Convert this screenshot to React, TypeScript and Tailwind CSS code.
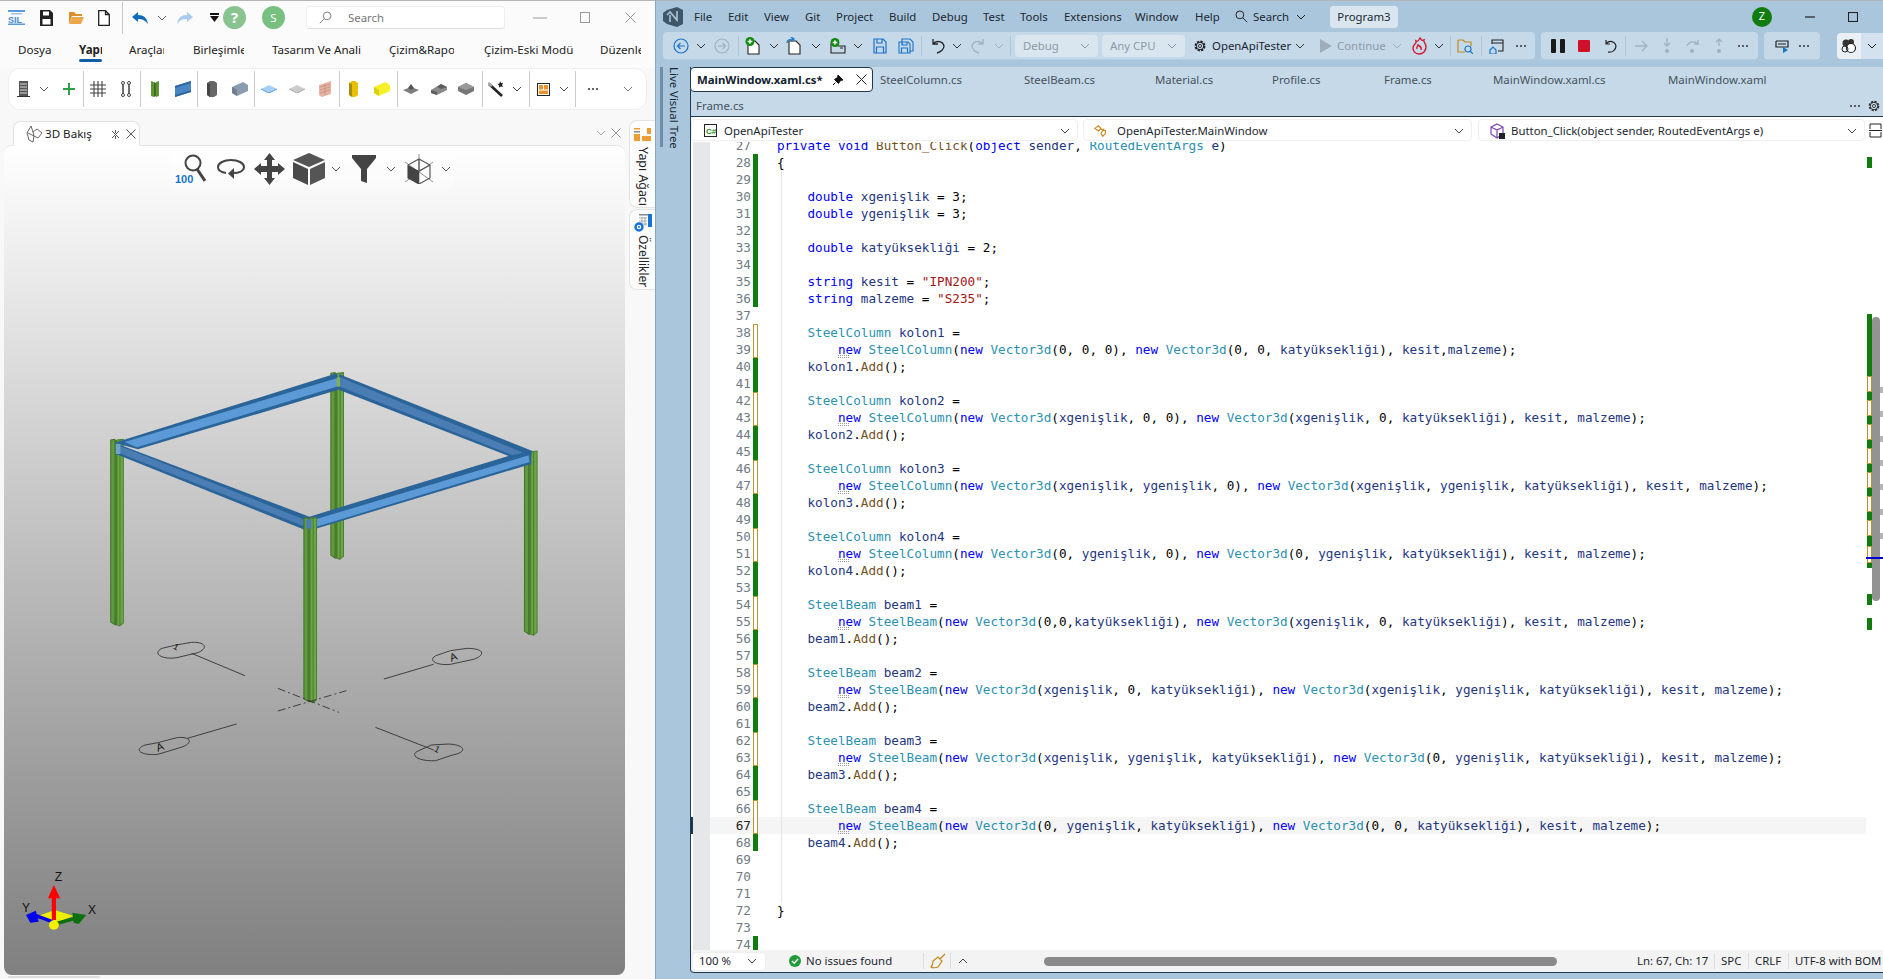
import React from "react";

const Chev = ({ c = "", up = false }: { c?: string; up?: boolean }) => (
  <svg viewBox="0 0 10 10" className={"w-[10px] h-[10px] shrink-0 " + c} fill="none" stroke="currentColor" strokeWidth="1">
    <path d={up ? "M1 7 L5 3 L9 7" : "M1 3 L5 7 L9 3"} />
  </svg>
);
const Sep = ({ c = "" }: { c?: string }) => <div className={"w-[1px] shrink-0 " + c} />;
const Ic = ({ c, children, v = "0 0 16 16" }: { c: string; children: React.ReactNode; v?: string }) => (
  <svg viewBox={v} className={"shrink-0 " + c}>{children}</svg>
);
const Dots = ({ c = "" }: { c?: string }) => (
  <Ic c={"w-[12px] h-[4px] " + c} v="0 0 12 4"><circle cx="2" cy="2" r="1" fill="#333" /><circle cx="6" cy="2" r="1" fill="#333" /><circle cx="10" cy="2" r="1" fill="#333" /></Ic>
);

/* ---------- left app ---------- */
function LeftTitle() {
  return (
    <div className="flex items-center h-[33px] shrink-0 bg-[#fbfbfb]">
      <Ic c="w-[17px] h-[15px] ml-[8px]" v="0 0 17 15">
        <rect x="0" y="0" width="17" height="2" fill="#5b9bd5" /><rect x="3" y="3" width="11" height="1.5" fill="#9cc3e6" />
        <text x="0" y="13" fontSize="9" fontWeight="700" fill="#4a8ccb" fontFamily="Liberation Sans">SIL</text>
        <rect x="0" y="13.5" width="17" height="1.5" fill="#5b9bd5" />
      </Ic>
      <Ic c="w-[13px] h-[16px] ml-[15px]" v="0 0 13 16"><path d="M0 0H10L13 3V16H0Z" fill="#222" /><rect x="3" y="1.5" width="6" height="4" fill="#fff" /><rect x="2.5" y="9" width="8" height="5.5" fill="#fff" /></Ic>
      <Ic c="w-[15px] h-[13px] ml-[16px]" v="0 0 15 13"><path d="M0 1H5L7 3H13V5H3L0 13Z" fill="#d98f2e" /><path d="M3 6H15L12 13H0Z" fill="#eda64a" /></Ic>
      <Ic c="w-[12px] h-[16px] ml-[14px]" v="0 0 12 16"><path d="M.7.7H7.5L11.3 4.5V15.3H.7Z M7.5.7V4.5H11.3" fill="#fff" stroke="#222" strokeWidth="1.3" /></Ic>
      <Sep c="h-[32px] bg-[#c9c9c9] ml-[12px]" />
      <Ic c="w-[16px] h-[12px] ml-[9px]" v="0 0 16 12"><path d="M0 5L6 0V3C12 3 15 6 16 12C13 8 10 7 6 7V10Z" fill="#0f6cbd" /></Ic>
      <Chev c="ml-[9px] text-[#666]" />
      <Ic c="w-[16px] h-[12px] ml-[10px]" v="0 0 16 12"><path d="M16 5L10 0V3C4 3 1 6 0 12C3 8 6 7 10 7V10Z" fill="#a8cbee" /></Ic>
      <Ic c="w-[9px] h-[9px] ml-[17px]" v="0 0 9 9"><rect x="0" y="0" width="9" height="2" fill="#111" /><path d="M0 3H9L4.5 9Z" fill="#111" /></Ic>
      <div className="w-[23px] h-[23px] ml-[4px] rounded-full bg-[#88c48f] text-white font-bold text-[15px] flex items-center justify-center shrink-0">?</div>
      <div className="w-[23px] h-[23px] ml-[16px] rounded-full bg-[#77c07f] text-white text-[11.4px] flex items-center justify-center shrink-0">S</div>
      <div className="w-[199px] h-[23px] ml-[21px] bg-white rounded border border-[#eeeeee] border-b-[#dddddd] flex items-center shrink-0">
        <Ic c="w-[13px] h-[13px] ml-[12px]"><circle cx="10" cy="6" r="4.7" fill="none" stroke="#666" strokeWidth="1" /><path d="M6.5 9.5L1 15" stroke="#666" /></Ic>
        <span className="ml-[16px] text-[11.4px] text-[#777]">Search</span>
      </div>
      <Ic c="w-[14px] h-[10px] ml-[28px]" v="0 0 14 10"><path d="M0 5H14" stroke="#999" /></Ic>
      <Ic c="w-[10px] h-[11px] ml-[33px]" v="0 0 10 11"><rect x=".5" y=".5" width="9" height="10" fill="none" stroke="#999" /></Ic>
      <Ic c="w-[11px] h-[11px] ml-[35px]" v="0 0 11 11"><path d="M.5.5L10.5 10.5M10.5.5L.5 10.5" stroke="#999" /></Ic>
    </div>
  );
}

function RibbonTabs() {
  const t = "whitespace-nowrap overflow-hidden shrink-0 h-[17px] leading-[17px] ";
  return (
    <div className="flex items-start h-[34px] pt-[7px] shrink-0 text-[11.6px] text-[#222] bg-[#fbfbfb]">
      <div className={t + "ml-[18px] w-[34px]"}>Dosya</div>
      <div className="ml-[27px] w-[23px] shrink-0 flex flex-col">
        <div className="h-[17px] leading-[17px] font-bold overflow-hidden whitespace-nowrap">Yapı</div>
        <div className="mt-[1px] h-[3px] rounded bg-[#0f5fa8]" />
      </div>
      <div className={t + "ml-[27px] w-[35px]"}>Araçlar</div>
      <div className={t + "ml-[29px] w-[51px]"}>Birleşimler</div>
      <div className={t + "ml-[28px] w-[89px]"}>Tasarım Ve Analiz</div>
      <div className={t + "ml-[28px] w-[65px]"}>Çizim&Rapor</div>
      <div className={t + "ml-[30px] w-[90px]"}>Çizim-Eski Modü</div>
      <div className={t + "ml-[26px] w-[41px]"}>Düzenle</div>
    </div>
  );
}

const Foot = ({ c, v }: { c: string; v: number }) => (
  <Ic c={"w-[16px] h-[14px] " + c} v="0 0 16 14">
    {v === 0 && <path d="M0 8L8 5L16 8L8 12Z" fill="#7d7d7d" />}
    {v === 0 && <path d="M5 6L8 2L11 6L8 8Z" fill="#555" />}
    {v === 1 && <path d="M0 8L10 2L16 5L16 8L6 13L0 11Z" fill="#8a8a8a" />}
    {v === 1 && <path d="M0 8L6 10V13L0 11Z M10 2L16 5L10 7L6 5Z" fill="#5d5d5d" />}
    {v === 2 && <path d="M0 5L8 1L16 5V9L8 13L0 9Z" fill="#777" />}
    {v === 2 && <path d="M0 5L8 1L16 5L8 8Z" fill="#9b9b9b" />}
  </Ic>
);

function Ribbon() {
  const s = "h-[36px] bg-[#cccccc]";
  return (
    <div className="ml-[8px] w-[639px] h-[42px] shrink-0 bg-white rounded-[12px] border border-[#eeeeee] flex items-center">
      <Ic c="w-[13px] h-[16px] ml-[8px]" v="0 0 13 16"><rect x="2" y="0" width="9" height="15" fill="#555" /><path d="M3 3H10M3 6H10M3 9H10M3 12H10" stroke="#ddd" /><path d="M0 15.5H13" stroke="#333" /></Ic>
      <Chev c="ml-[9px] text-[#555]" />
      <Ic c="w-[12px] h-[12px] ml-[14px]" v="0 0 12 12"><path d="M6 0V12M0 6H12" stroke="#2f9e44" strokeWidth="2" /></Ic>
      <Sep c={s + " ml-[8px]"} />
      <Ic c="w-[16px] h-[16px] ml-[6px]"><path d="M4 0V16M8 0V16M12 0V16M0 4H16M0 8H16M0 12H16" stroke="#444" strokeWidth="1.1" /></Ic>
      <Ic c="w-[10px] h-[16px] ml-[15px]" v="0 0 10 16"><circle cx="2" cy="2" r="1.5" fill="none" stroke="#444" /><circle cx="8" cy="2" r="1.5" fill="none" stroke="#444" /><circle cx="2" cy="14" r="1.5" fill="none" stroke="#444" /><circle cx="8" cy="14" r="1.5" fill="none" stroke="#444" /><path d="M2 3.5V12.5M8 3.5V12.5" stroke="#222" strokeWidth="1.3" /></Ic>
      <Sep c={s + " ml-[9px]"} />
      <Ic c="w-[8px] h-[16px] ml-[10px]" v="0 0 8 16"><path d="M0 0L3 1V16L0 15Z" fill="#5f9336" /><path d="M3 1L5 2V15L3 16Z" fill="#3f6f22" /><path d="M5 1L8 0V15L5 16Z" fill="#5f9336" /></Ic>
      <Ic c="w-[16px] h-[16px] ml-[16px]"><path d="M0 5L16 0V11L0 16Z" fill="#4a86c5" /><path d="M0 5L16 0V2L0 7ZM0 14L16 9V11L0 16Z" fill="#2f66a0" /></Ic>
      <Sep c={s + " ml-[6px]"} />
      <Ic c="w-[10px] h-[16px] ml-[9px]" v="0 0 10 16"><path d="M0 2L3 0H7L10 2V14L7 16H3L0 14Z" fill="#666" /><path d="M0 2L3 3V16L0 14Z" fill="#444" /></Ic>
      <Ic c="w-[16px] h-[14px] ml-[15px]" v="0 0 16 14"><path d="M0 5L11 0L16 3V9L5 14L0 11Z" fill="#8c9cb0" /><path d="M0 5L5 8V14L0 11Z" fill="#6f7f92" /></Ic>
      <Sep c={s + " ml-[6px]"} />
      <Ic c="w-[16px] h-[8px] ml-[6px]" v="0 0 16 8"><path d="M0 4L8 0L16 4L8 8Z" fill="#a6d0f5" /><path d="M0 4L8 8L16 4" fill="none" stroke="#5b9bd5" /></Ic>
      <Ic c="w-[16px] h-[8px] ml-[12px]" v="0 0 16 8"><path d="M0 4L8 0L16 4L8 8Z" fill="#cccccc" /><path d="M0 4L8 8L16 4" fill="none" stroke="#a8a8a8" /></Ic>
      <Ic c="w-[12px] h-[16px] ml-[14px]" v="0 0 12 16"><path d="M0 4L12 0V13L3 16L0 14Z" fill="#e7b3a1" /><path d="M1 6L11 3M1 9L11 6M1 12L11 9M6 3V14" stroke="#c08a78" strokeWidth=".7" /></Ic>
      <Sep c={s + " ml-[8px]"} />
      <Ic c="w-[9px] h-[16px] ml-[9px]" v="0 0 9 16"><path d="M0 2L3 0H6L9 2V14L6 16H3L0 14Z" fill="#e8c000" /><path d="M0 2L3 3V16L0 14Z" fill="#a88c10" /></Ic>
      <Ic c="w-[16px] h-[14px] ml-[16px]" v="0 0 16 14"><path d="M0 5L11 0L16 3V9L5 14L0 11Z" fill="#f7ef2a" /><path d="M0 5L5 8V14L0 11Z" fill="#d8cf10" /></Ic>
      <Sep c={s + " ml-[7px]"} />
      <Foot c="ml-[5px]" v={0} />
      <Foot c="ml-[12px]" v={1} />
      <Foot c="ml-[11px]" v={2} />
      <Sep c={s + " ml-[8px]"} />
      <Ic c="w-[17px] h-[16px] ml-[5px]" v="0 0 17 16"><path d="M1 3L14 15" stroke="#222" strokeWidth="2.6" /><path d="M0 2L4 5" stroke="#aaa" strokeWidth="2.6" /><path d="M12 0L13 2L15 2L14 4L15 6L13 5.5L11 6.5L11 4.5L9.5 3L11.5 2.5Z" fill="#222" /></Ic>
      <Chev c="ml-[7px] text-[#444]" />
      <Sep c={s + " ml-[7px]"} />
      <Ic c="w-[13px] h-[13px] ml-[7px]" v="0 0 13 13"><rect x=".5" y=".5" width="12" height="12" fill="#fff" stroke="#222" /><rect x="2" y="2" width="4" height="4.5" fill="#e8912d" /><rect x="7" y="2" width="4" height="4.5" fill="#e8912d" /><rect x="2" y="7.5" width="9" height="3.5" fill="#e8912d" /></Ic>
      <Chev c="ml-[9px] text-[#444]" />
      <Sep c={s + " ml-[6px]"} />
      <Dots c="ml-[11px]" />
      <Chev c="ml-[24px] text-[#777]" />
    </div>
  );
}

/* ---- 3D model, coordinates taken from the picture: x scaled to 1568/660, y scaled by 3 ---- */
const Column = ({ x, top, bot }: { x: number; top: number; bot: number }) => (
  <g>
    <path d={`M${x} ${top}L${x + 10} ${top - 2}V${bot + 2}L${x} ${bot - 6}Z`} fill="#5f9a3c" stroke="#44702c" strokeWidth="1" vectorEffect="non-scaling-stroke" />
    <path d={`M${x + 10} ${top}H${x + 15}V${bot + 4}H${x + 10}Z`} fill="#4a7a2e" />
    <path d={`M${x + 15} ${top}L${x + 30} ${top - 2}V${bot - 3}L${x + 21} ${bot + 6}L${x + 15} ${bot + 2}Z`} fill="#6aa845" stroke="#4f7f33" strokeWidth="1" vectorEffect="non-scaling-stroke" />
    <path d={`M${x + 22} ${top}V${bot + 5}`} stroke="#4a7a2e" strokeWidth="1" vectorEffect="non-scaling-stroke" />
  </g>
);

function Model() {
  const L = { stroke: "#333", strokeWidth: 0.9, vectorEffect: "non-scaling-stroke" as const, fill: "none" };
  return (
    <svg viewBox="0 0 1568 1920" preserveAspectRatio="none" className="absolute left-[-4px] top-[194px] w-[660px] h-[640px] pointer-events-none">
      <Column x={786} top={100} bot={652} />
      <Column x={263} top={300} bot={852} />
      <Column x={1246} top={335} bot={880} />
      {/* beams */}
      <path d="M272 308L800 100L808 148L328 328L300 318Z" fill="#2b6498" />
      <path d="M296 306L802 114L805 138L325 322Z" fill="#5b9ad6" />
      <path d="M806 103L1265 333L1262 345L1212 350L806 150Z" fill="#2b6498" />
      <path d="M808 112L1243 338L1218 346L808 140Z" fill="#4a7db3" />
      <path d="M275 310L735 530L752 566L725 570L275 342Z" fill="#2b6498" />
      <path d="M285 318L725 540L725 560L285 340Z" fill="#4a7db3" />
      <path d="M735 530L1212 346L1262 340V372L750 566L726 560Z" fill="#2b6498" />
      <path d="M752 537L1256 346L1258 366L752 560Z" fill="#5b9ad6" />
      <Column x={722} top={535} bot={1082} />
      <path d="M728 538H740V566H728Z" fill="#4a7db3" />
      <path d="M800 112H808V140H800Z" fill="#7fb24f" />
      <path d="M275 312H286V342H275Z" fill="#6fa3c8" />
      {/* grid bubbles */}
      <path d="M415 916L455 907C490 905 495 925 470 938L420 953C385 960 360 940 385 925Z" {...L} />
      <path d="M455 940L582 1007" {...L} />
      <path d="M1070 932L1110 925C1150 925 1155 945 1125 958L1070 973C1030 978 1015 955 1040 945Z" {...L} />
      <path d="M912 1017L1030 973" {...L} />
      <path d="M375 1208L420 1193C455 1188 460 1210 430 1222L375 1243C335 1248 315 1228 345 1215Z" {...L} />
      <path d="M445 1195L562 1152" {...L} />
      <path d="M1025 1215L1065 1212C1110 1215 1108 1238 1075 1245L1035 1262C995 1265 970 1245 995 1232Z" {...L} />
      <path d="M892 1162L1030 1230" {...L} />
      <path d="M660 1045L805 1117" {...L} strokeDasharray="8 3 2 3" />
      <path d="M660 1113L823 1052" {...L} strokeDasharray="8 3 2 3" />
      <text transform="translate(410 925) scale(2.376 3) rotate(28)" fontSize="9" fontFamily="Liberation Sans" fill="#111">1</text>
      <text transform="translate(1072 965) scale(2.376 3) rotate(-20)" fontSize="11" fontFamily="Liberation Sans" fill="#111">A</text>
      <text transform="translate(375 1235) scale(2.376 3) rotate(-20)" fontSize="11" fontFamily="Liberation Sans" fill="#111">A</text>
      <text transform="translate(1030 1232) scale(2.376 3) rotate(28)" fontSize="9" fontFamily="Liberation Sans" fill="#111">1</text>
      {/* axes */}
      <path d="M90 1728L130 1710L175 1728L130 1750Z" fill="#eeee00" />
      <path d="M125 1745L75 1722" stroke="#0000ee" strokeWidth="10" />
      <path d="M62 1725L85 1712L92 1745L72 1748Z" fill="#0000ee" />
      <path d="M135 1750L185 1733" stroke="#0d6f0d" strokeWidth="10" />
      <path d="M172 1718L205 1725L187 1752L175 1748Z" fill="#0d6f0d" />
      <path d="M128 1740V1672" stroke="#ff0000" strokeWidth="10" />
      <path d="M114 1675L128 1635L143 1675Z" fill="#ff0000" />
      <ellipse cx="128" cy="1755" rx="12" ry="14" fill="#f5f000" />
      <text transform="translate(130 1622) scale(2.376 3)" fontSize="12" fontFamily="Liberation Sans" fill="#111">Z</text>
      <text transform="translate(52 1716) scale(2.376 3)" fontSize="12" fontFamily="Liberation Sans" fill="#111">Y</text>
      <text transform="translate(209 1722) scale(2.376 3)" fontSize="12" fontFamily="Liberation Sans" fill="#111">X</text>
    </svg>
  );
}

function ViewportTools() {
  return (
    <div className="flex items-center ml-[168px] mt-[4px] w-[282px] h-[38px] rounded-lg bg-white/40">
      <Ic c="w-[31px] h-[30px] ml-[3px]" v="0 0 31 30">
        <circle cx="18" cy="9" r="7.5" fill="none" stroke="#444" strokeWidth="2" /><path d="M22 15L30 27" stroke="#444" strokeWidth="3" />
        <text x="0" y="29" fontSize="11" fontWeight="700" fill="#1a73c9" fontFamily="Liberation Sans">100</text>
      </Ic>
      <Ic c="w-[28px] h-[22px] ml-[11px]" v="0 0 28 22"><path d="M9 15C3 14 1 11 1 9C1 5 7 2 14 2C21 2 27 5 27 9C27 13 22 15 16 15" fill="none" stroke="#444" strokeWidth="2" /><path d="M17 10L11 15.5L17 21Z" fill="#444" /></Ic>
      <Ic c="w-[31px] h-[32px] ml-[9px]" v="0 0 31 32"><path d="M15.5 0L21 7H18V13H24V10L31 16L24 22V19H18V25H21L15.5 32L10 25H13V19H7V22L0 16L7 10V13H13V7H10Z" fill="#444" /></Ic>
      <Ic c="w-[32px] h-[32px] ml-[8px]" v="0 0 32 32"><path d="M16 0L32 7L16 14L0 7Z" fill="#555" /><path d="M0 9L15 16V32L0 25Z" fill="#4a4a4a" /><path d="M32 9L17 16V32L32 25Z" fill="#555" /></Ic>
      <Chev c="ml-[6px] text-[#555]" />
      <Ic c="w-[24px] h-[28px] ml-[11px]" v="0 0 24 28"><path d="M0 0H24V3L15 14V28L9 26V14L0 3Z" fill="#444" /></Ic>
      <Chev c="ml-[10px] text-[#555]" />
      <Ic c="w-[32px] h-[30px] ml-[7px]" v="0 0 32 30">
        <path d="M16 0V30M2 28L30 8M30 28L2 8" stroke="#777" strokeWidth=".8" />
        <path d="M16 5L27 11V24L16 30L5 24V11Z" fill="none" stroke="#555" strokeWidth="1.2" />
        <path d="M5 11L16 17V30L5 24Z" fill="#444" /><path d="M16 17L27 11M16 5V17" stroke="#555" strokeWidth="1.2" />
      </Ic>
      <Chev c="ml-[6px] text-[#555]" />
    </div>
  );
}

function LeftRail() {
  return (
    <div className="w-[26px] shrink-0 flex flex-col mt-[10px]">
      <div className="h-[88px] bg-[#fdfdfd] border border-r-0 border-[#e4e4e4] rounded-l-[8px] flex flex-col items-center">
        <Ic c="w-[17px] h-[13px] mt-[7px]" v="0 0 17 13"><rect x="13" y="0" width="4" height="6" fill="#ed9b33" /><rect x="0" y="0" width="6" height="1.5" fill="#ed9b33" /><rect x="0" y="3" width="6" height="1.5" fill="#888" /><rect x="0" y="6" width="6" height="7" fill="#ed9b33" /><rect x="8" y="8" width="9" height="5" fill="#ed9b33" /></Ic>
        <span className="[writing-mode:vertical-rl] text-[12.4px] leading-[14px] text-[#222] mt-[6px] whitespace-nowrap">Yapı Ağacı</span>
      </div>
      <div className="h-[81px] mt-[1px] bg-[#fdfdfd] border border-r-0 border-[#e4e4e4] rounded-l-[8px] flex flex-col items-center">
        <Ic c="w-[18px] h-[18px] mt-[4px]" v="0 0 18 18"><rect x="5" y="0" width="13" height="1.5" fill="#888" /><path d="M5 4H13M5 7H13M5 10H13M8 3V12M11 3V12" stroke="#aaa" /><rect x="14" y="0" width="4" height="13" fill="#1473d6" /><circle cx="5" cy="13" r="3.5" fill="none" stroke="#1473d6" strokeWidth="2.4" /><circle cx="5" cy="13" r="1" fill="#1473d6" /></Ic>
        <span className="[writing-mode:vertical-rl] text-[12px] leading-[14px] text-[#222] mt-[3px] whitespace-nowrap">Özellikler</span>
      </div>
    </div>
  );
}

function LeftApp() {
  return (
    <div className="w-[655px] shrink-0 h-[979px] flex flex-col bg-[#f8f8f8] border-t border-[#b5b5b5] overflow-hidden">
      <LeftTitle />
      <RibbonTabs />
      <Ribbon />
      <div className="flex flex-1 min-h-0">
        <div className="w-[629px] shrink-0 flex flex-col">
          <div className="h-[35px] shrink-0 flex items-end pl-[13px] pr-[8px]">
            <div className="w-[130px] h-[25px] flex items-center bg-white border border-b-0 border-[#e2e2e2] rounded-t-[7px] -mb-[1px] relative z-10">
              <Ic c="w-[18px] h-[18px] ml-[11px]" v="0 0 18 18"><path d="M6 1L2 8L4 15L8 17L9 11L13 13L17 8L12 4L8 7Z M8 7L9 11M3 8L9 11" fill="none" stroke="#555" strokeWidth=".9" /></Ic>
              <span className="ml-[2px] w-[46px] shrink-0 text-[11.6px] text-[#222] whitespace-nowrap">3D Bakış</span>
              <Ic c="w-[9px] h-[9px] ml-[20px]" v="0 0 9 9"><path d="M1 1L8 8M8 1L1 8M4.5 0V3M4.5 6V9" stroke="#555" /></Ic>
              <Ic c="w-[10px] h-[10px] ml-[6px]" v="0 0 10 10"><path d="M.5.5L9.5 9.5M9.5.5L.5 9.5" stroke="#555" /></Ic>
            </div>
            <Chev c="ml-[456px] mb-[7px] text-[#aaa]" />
            <Ic c="w-[10px] h-[10px] ml-[5px] mb-[7px]" v="0 0 10 10"><path d="M.5.5L9.5 9.5M9.5.5L.5 9.5" stroke="#999" /></Ic>
          </div>
          <div className="ml-[4px] w-[621px] h-[830px] shrink-0 rounded-t-[8px] rounded-b-[8px] border-t border-[#e5e5e5] bg-linear-to-b from-white to-[#808080] relative overflow-hidden">
            <ViewportTools />
            <Model />
          </div>
          <div className="ml-[8px] mt-[1px] w-[92px] h-[2px] bg-[#dddddd] rounded" />
        </div>
        <LeftRail />
      </div>
    </div>
  );
}

/* ---------- Visual Studio ---------- */
function VsTitle() {
  const m = "shrink-0 whitespace-nowrap ";
  return (
    <div className="h-[32px] shrink-0 flex items-center border-t border-[#b5b5b5] text-[11.4px] text-[#1b2630]">
      <Ic c="w-[20px] h-[20px] ml-[7px]" v="0 0 20 20"><path d="M0 6L4 3L14 0L20 3V17L14 20L4 17L0 14Z" fill="#3f5568" /><path d="M4 8L7 5L14 13V4M7 8V15" fill="none" stroke="#a9c6dc" strokeWidth="1.6" /></Ic>
      <div className={m + "ml-[11px] w-[34px]"}>File</div>
      <div className={m + "w-[36px]"}>Edit</div>
      <div className={m + "w-[41px]"}>View</div>
      <div className={m + "w-[31px]"}>Git</div>
      <div className={m + "w-[53px]"}>Project</div>
      <div className={m + "w-[43px]"}>Build</div>
      <div className={m + "w-[51px]"}>Debug</div>
      <div className={m + "w-[37px]"}>Test</div>
      <div className={m + "w-[44px]"}>Tools</div>
      <div className={m + "w-[71px]"}>Extensions</div>
      <div className={m + "w-[60px]"}>Window</div>
      <div className={m + "w-[40px]"}>Help</div>
      <Ic c="w-[13px] h-[13px]"><circle cx="6" cy="6" r="4.8" fill="none" stroke="#222" strokeWidth="1.2" /><path d="M9.5 9.5L15 15" stroke="#222" strokeWidth="1.2" /></Ic>
      <div className={m + "ml-[5px] w-[43px]"}>Search</div>
      <Chev c="text-[#222]" />
      <div className="ml-[24px] w-[68px] h-[22px] shrink-0 bg-[#d9e6f0] rounded flex items-center justify-center">Program3</div>
      <div className="ml-[354px] w-[20px] h-[20px] shrink-0 rounded-full bg-[#107c10] text-white text-[11px] flex items-center justify-center">Z</div>
      <Ic c="w-[10px] h-[10px] ml-[33px]" v="0 0 10 10"><path d="M0 5H10" stroke="#222" strokeWidth="1.2" /></Ic>
      <Ic c="w-[10px] h-[10px] ml-[33px]" v="0 0 10 10"><rect x=".5" y=".5" width="9" height="9" fill="none" stroke="#222" strokeWidth="1.1" /></Ic>
    </div>
  );
}

function VsToolbar() {
  const sep = "h-[20px] bg-[#aec6d8]";
  const g = "text-[#333]";
  const dim = "text-[#9fb0bd]";
  const bar = "h-[28px] shrink-0 bg-[#c5d9e8] rounded flex items-center border-b border-[#b6cde0]";
  return (
    <div className="h-[28px] shrink-0 flex items-center text-[11.4px]">
      <div className={bar + " ml-[7px] w-[872px]"}>
        <Ic c="w-[16px] h-[16px] ml-[10px]"><circle cx="8" cy="8" r="7" fill="none" stroke="#1a73c9" strokeWidth="1.2" /><path d="M12 8H4.5M7.5 5L4.5 8L7.5 11" fill="none" stroke="#1a73c9" strokeWidth="1.2" /></Ic>
        <Chev c={"ml-[7px] " + g} />
        <Ic c="w-[16px] h-[16px] ml-[8px]"><circle cx="8" cy="8" r="7" fill="none" stroke="#a0b2c0" strokeWidth="1.2" /><path d="M4 8H11.5M8.5 5L11.5 8L8.5 11" fill="none" stroke="#a0b2c0" strokeWidth="1.2" /></Ic>
        <Sep c={sep + " ml-[8px]"} />
        <Ic c="w-[16px] h-[18px] ml-[6px]" v="0 0 16 18"><path d="M3 4H10L14 8V17H3Z" fill="#fff" stroke="#222" strokeWidth="1.1" /><circle cx="5" cy="4.5" r="4.5" fill="#108a10" /><path d="M5 2.2V6.8M2.7 4.5H7.3" stroke="#fff" strokeWidth="1.3" /></Ic>
        <Chev c={"ml-[8px] " + g} />
        <Ic c="w-[16px] h-[18px] ml-[7px]" v="0 0 16 18"><path d="M3 4H10L14 8V17H3Z" fill="#fff" stroke="#222" strokeWidth="1.1" /><path d="M1 6C1 3 3 2 7 2M5 0L8 2L5 4" fill="none" stroke="#1a73c9" strokeWidth="1.2" /></Ic>
        <Chev c={"ml-[9px] " + g} />
        <Ic c="w-[16px] h-[16px] ml-[9px]"><path d="M1 6H6L8 8H15V15H1Z" fill="none" stroke="#222" strokeWidth="1.1" /><circle cx="5" cy="4.5" r="4.5" fill="#108a10" /><path d="M5 2.2V6.8M2.7 4.5H7.3" stroke="#fff" strokeWidth="1.3" /><path d="M10 10H13" stroke="#222" /></Ic>
        <Chev c={"ml-[7px] " + g} />
        <Ic c="w-[14px] h-[16px] ml-[10px]" v="0 0 14 16"><path d="M1 1H10L13 4V15H1Z M4 1V5H9V1 M3.5 15V9H10.5V15" fill="none" stroke="#1a73c9" strokeWidth="1.2" /></Ic>
        <Ic c="w-[16px] h-[16px] ml-[11px]"><path d="M4 1H12L15 4V13H4Z" fill="none" stroke="#1a73c9" strokeWidth="1.1" /><path d="M1 4H10L12 6V15H1Z M4 4V7H9V4 M3.5 15V10H9.5V15" fill="#c5d9e8" stroke="#1a73c9" strokeWidth="1.1" /></Ic>
        <Sep c={sep + " ml-[7px]"} />
        <Ic c="w-[16px] h-[16px] ml-[8px]"><path d="M3 1V6H8M3 6C6 2 13 3 14 8C14 11 11 14 7 15" fill="none" stroke="#222" strokeWidth="1.3" /></Ic>
        <Chev c={"ml-[6px] " + g} />
        <Ic c="w-[16px] h-[16px] ml-[8px]"><path d="M13 1V6H8M13 6C10 2 3 3 2 8C2 11 5 14 9 15" fill="none" stroke="#a0b2c0" strokeWidth="1.3" /></Ic>
        <Chev c={"ml-[8px] " + dim} />
        <Sep c={sep + " ml-[6px]"} />
        <div className="ml-[4px] w-[83px] h-[22px] shrink-0 bg-[#d9e6f0] rounded flex items-center justify-between px-[8px] text-[#8b9aa6]">Debug<Chev c="text-[#8b9aa6]" /></div>
        <div className="ml-[4px] w-[83px] h-[22px] shrink-0 bg-[#d9e6f0] rounded flex items-center justify-between px-[8px] text-[#8b9aa6]">Any CPU<Chev c="text-[#8b9aa6]" /></div>
        <Ic c="w-[14px] h-[14px] ml-[8px]"><circle cx="8" cy="8" r="5" fill="none" stroke="#222" strokeWidth="2.4" strokeDasharray="2.6 1.3" /><circle cx="8" cy="8" r="4.2" fill="none" stroke="#222" /><circle cx="8" cy="8" r="1.8" fill="none" stroke="#222" /></Ic>
        <div className="ml-[5px] w-[82px] shrink-0 whitespace-nowrap text-[#1b2630]">OpenApiTester</div>
        <Chev c={"ml-[1px] " + g} />
        <Ic c="w-[12px] h-[14px] ml-[15px]" v="0 0 12 14"><path d="M0 0L12 7L0 14Z" fill="#a0aeba" /></Ic>
        <div className="ml-[5px] w-[50px] shrink-0 text-[#8b9aa6]">Continue</div>
        <Chev c={"ml-[5px] " + dim} />
        <Ic c="w-[16px] h-[18px] ml-[10px]" v="0 0 16 18"><path d="M8 1C10 3 9 4 12 3C11 5 14 6 14 10C14 14 11 17 7 17C3 17 1 14 1 11C1 7 5 7 4 4C6 5 7 3 8 1Z" fill="none" stroke="#d3182d" strokeWidth="1.4" /><path d="M5 12C4 10 6 9 6 8C8 9 10 10 9 13" fill="none" stroke="#d3182d" strokeWidth="1.4" /></Ic>
        <Chev c={"ml-[6px] " + g} />
        <Sep c={sep + " ml-[6px]"} />
        <Ic c="w-[16px] h-[16px] ml-[6px]"><path d="M1 2H6L8 4H14V8M1 2V14H8" fill="none" stroke="#c58a1c" strokeWidth="1.2" /><circle cx="11" cy="11" r="3" fill="none" stroke="#1a73c9" strokeWidth="1.2" /><path d="M13 13L16 16" stroke="#1a73c9" strokeWidth="1.2" /></Ic>
        <Sep c={sep + " ml-[8px]"} />
        <Ic c="w-[16px] h-[16px] ml-[7px]"><path d="M3 6V2H14V13H9M3 5H14" fill="none" stroke="#222" strokeWidth="1.1" /><path d="M1 12L4 9L7 12V16H1Z" fill="none" stroke="#1a73c9" strokeWidth="1.2" /></Ic>
        <Dots c="ml-[10px]" />
      </div>
      <div className={bar + " ml-[6px] w-[217px]"}>
        <div className="ml-[10px] w-[14px] h-[14px] shrink-0 flex justify-between"><div className="w-[5px] h-[14px] bg-[#1a1a1a] rounded-[1px]" /><div className="w-[5px] h-[14px] bg-[#1a1a1a] rounded-[1px]" /></div>
        <div className="ml-[13px] w-[12px] h-[12px] shrink-0 bg-[#d00f28] rounded-[1px]" />
        <Ic c="w-[16px] h-[16px] ml-[12px]"><path d="M4 2V6H8M4.5 5.5C7 2 13 3 14 8C14 12 10 15 6 14" fill="none" stroke="#222" strokeWidth="1.2" /></Ic>
        <Sep c={sep + " ml-[7px]"} />
        <Ic c="w-[16px] h-[16px] ml-[7px]"><path d="M2 8H14M9 3L14 8L9 13" fill="none" stroke="#a0b2c0" strokeWidth="1.3" /></Ic>
        <Ic c="w-[16px] h-[16px] ml-[10px]"><path d="M8 0V8M5 5L8 8L11 5" fill="none" stroke="#a0b2c0" strokeWidth="1.3" /><circle cx="8" cy="13" r="2" fill="#a0b2c0" /></Ic>
        <Ic c="w-[16px] h-[16px] ml-[10px]"><path d="M2 8C4 3 10 3 13 6M13 2V6H9" fill="none" stroke="#a0b2c0" strokeWidth="1.3" /><circle cx="7" cy="13" r="2" fill="#a0b2c0" /></Ic>
        <Ic c="w-[16px] h-[16px] ml-[10px]"><path d="M8 8V1M5 4L8 1L11 4" fill="none" stroke="#a0b2c0" strokeWidth="1.3" /><circle cx="8" cy="13" r="2" fill="#a0b2c0" /></Ic>
        <Dots c="ml-[10px]" />
      </div>
      <div className={bar + " ml-[6px] w-[56px]"}>
        <Ic c="w-[16px] h-[16px] ml-[10px]"><path d="M2 3H14V9H8M8 9H2V3M4 6H12" fill="none" stroke="#222" strokeWidth="1.2" /><path d="M9 9V15L14 12Z" fill="#1a73c9" /></Ic>
        <Dots c="ml-[8px]" />
      </div>
      <div className="ml-[17px] h-[26px] flex items-center shrink-0">
        <div className="w-[24px] h-[26px] bg-[#e9f0f6] rounded-l flex items-center justify-center">
          <Ic c="w-[16px] h-[16px]"><circle cx="5" cy="5" r="3.5" fill="#333" /><circle cx="10" cy="4" r="3" fill="#333" /><circle cx="10" cy="10" r="4.5" fill="#fff" stroke="#222" strokeWidth="1.2" /><circle cx="4" cy="11" r="3" fill="none" stroke="#222" /></Ic>
        </div>
        <div className="w-[22px] h-[26px] bg-[#d3e2ee] flex items-center justify-center"><Chev c="text-[#222]" /></div>
      </div>
    </div>
  );
}

const KW = new Set(["double", "string", "new", "private", "void", "object"]);
const TY = new Set(["SteelColumn", "SteelBeam", "Vector3d", "RoutedEventArgs"]);
const ME = new Set(["Add", "Button_Click"]);

function tokenCls(t: string) {
  if (t.startsWith('"')) return "text-[#a31515]";
  if (KW.has(t)) return "text-[#0000ff]";
  if (TY.has(t)) return "text-[#2b91af]";
  if (ME.has(t)) return "text-[#74531f]";
  if (/^[\p{L}_]/u.test(t)) return "text-[#1f377f]";
  return "text-black";
}

const CODE: Record<number, string> = {
  27: "private void Button_Click(object sender, RoutedEventArgs e)",
  28: "{",
  30: "    double xgenişlik = 3;",
  31: "    double ygenişlik = 3;",
  33: "    double katyüksekliği = 2;",
  35: '    string kesit = "IPN200";',
  36: '    string malzeme = "S235";',
  38: "    SteelColumn kolon1 =",
  39: "        new SteelColumn(new Vector3d(0, 0, 0), new Vector3d(0, 0, katyüksekliği), kesit,malzeme);",
  40: "    kolon1.Add();",
  42: "    SteelColumn kolon2 =",
  43: "        new SteelColumn(new Vector3d(xgenişlik, 0, 0), new Vector3d(xgenişlik, 0, katyüksekliği), kesit, malzeme);",
  44: "    kolon2.Add();",
  46: "    SteelColumn kolon3 =",
  47: "        new SteelColumn(new Vector3d(xgenişlik, ygenişlik, 0), new Vector3d(xgenişlik, ygenişlik, katyüksekliği), kesit, malzeme);",
  48: "    kolon3.Add();",
  50: "    SteelColumn kolon4 =",
  51: "        new SteelColumn(new Vector3d(0, ygenişlik, 0), new Vector3d(0, ygenişlik, katyüksekliği), kesit, malzeme);",
  52: "    kolon4.Add();",
  54: "    SteelBeam beam1 =",
  55: "        new SteelBeam(new Vector3d(0,0,katyüksekliği), new Vector3d(xgenişlik, 0, katyüksekliği), kesit, malzeme);",
  56: "    beam1.Add();",
  58: "    SteelBeam beam2 =",
  59: "        new SteelBeam(new Vector3d(xgenişlik, 0, katyüksekliği), new Vector3d(xgenişlik, ygenişlik, katyüksekliği), kesit, malzeme);",
  60: "    beam2.Add();",
  62: "    SteelBeam beam3 =",
  63: "        new SteelBeam(new Vector3d(xgenişlik, ygenişlik, katyüksekliği), new Vector3d(0, ygenişlik, katyüksekliği), kesit, malzeme);",
  64: "    beam3.Add();",
  66: "    SteelBeam beam4 =",
  67: "        new SteelBeam(new Vector3d(0, ygenişlik, katyüksekliği), new Vector3d(0, 0, katyüksekliği), kesit, malzeme);",
  68: "    beam4.Add();",
  72: "}",
};

function changeCls(n: number) {
  if ((n >= 28 && n <= 36) || n === 68 || n === 74) return "bg-[#107c10]";
  if (n >= 38 && n <= 67) {
    const r = (n - 38) % 4;
    if (r === 0) return "bg-white border-x border-t border-[#b8962e]";
    if (r === 1) return "bg-white border-x border-b border-[#b8962e]";
    return "bg-[#107c10]";
  }
  return "";
}

function Line({ n }: { n: number }) {
  const text = CODE[n] ?? "";
  const parts = text.match(/"[^"]*"|[\p{L}_][\p{L}\p{N}_]*|\d+|\s+|./gu) ?? [];
  const cur = n === 67;
  let seenNew = false;
  return (
    <div className="flex h-[17px] leading-[17px] shrink-0">
      <div className={"w-[2px] shrink-0 " + (cur ? "bg-[#1e3a50]" : "bg-white")} />
      <div className="w-[17px] shrink-0 bg-[#e6e7e8]" />
      <div className={"flex flex-1 min-w-0 " + (cur ? "bg-[#f5f5f5]" : "")}>
        <div className={"w-[41px] shrink-0 text-right " + (cur ? "text-[#222]" : "text-[#6f7a84]")}>{n}</div>
        <div className={"w-[5px] ml-[2px] shrink-0 " + changeCls(n)} />
        <div className="ml-[19px] whitespace-pre">
          {parts.map((p, i) => {
            if (p === "new" && !seenNew && text.startsWith("        new")) {
              seenNew = true;
              return (
                <span key={i} className="text-[#0000ff] relative">
                  new
                  <span className="absolute left-0 bottom-[-1px] w-[11px] h-[3px] border-y border-dotted border-[#999]" />
                </span>
              );
            }
            return <span key={i} className={tokenCls(p)}>{p}</span>;
          })}
        </div>
      </div>
    </div>
  );
}

function OverviewBar() {
  const y = "h-[16px] bg-white border border-[#b8962e]";
  const g = "h-[8px] bg-[#107c10]";
  return (
    <div className="w-[17px] shrink-0 relative bg-white">
      <div className="flex flex-col w-[5px] ml-[1px]">
        <div className="h-[15px]" />
        <div className="h-[11px] bg-[#107c10]" />
        <div className="h-[146px]" />
        <div className="h-[62px] bg-[#107c10]" />
        <div className={y} /><div className={g} />
        <div className={y} /><div className={g} />
        <div className={y} /><div className={g} />
        <div className={y} /><div className={g} />
        <div className={y} /><div className={g} />
        <div className={y} /><div className={g} />
        <div className={y} /><div className="h-[10px] bg-[#107c10]" />
        <div className="h-[17px] bg-white border border-[#b8962e]" />
        <div className="h-[5px] bg-[#107c10]" />
        <div className="h-[26px]" />
        <div className="h-[11px] bg-[#107c10]" />
        <div className="h-[13px]" />
        <div className="h-[12px] bg-[#107c10]" />
      </div>
      <div className="absolute left-[6px] top-[175px] w-[8px] h-[284px] rounded-full bg-[#939393]" />
      <div className="absolute left-0 top-[415px] w-[17px] h-[2px] bg-[#0000d0]" />
      <div className="absolute left-[14px] top-[245px] w-[3px] h-[6px] bg-[#b5b5b5]" />
      <div className="absolute left-[14px] top-[269px] w-[3px] h-[6px] bg-[#b5b5b5]" />
      <div className="absolute left-[14px] top-[294px] w-[3px] h-[6px] bg-[#b5b5b5]" />
      <div className="absolute left-[14px] top-[318px] w-[3px] h-[6px] bg-[#b5b5b5]" />
      <div className="absolute left-[14px] top-[342px] w-[3px] h-[6px] bg-[#b5b5b5]" />
      <div className="absolute left-[14px] top-[367px] w-[3px] h-[6px] bg-[#b5b5b5]" />
      <div className="absolute left-[14px] top-[391px] w-[3px] h-[6px] bg-[#b5b5b5]" />
    </div>
  );
}

function Editor() {
  const rows: number[] = [];
  for (let i = 27; i <= 74; i++) rows.push(i);
  return (
    <div className="flex flex-1 min-h-0 bg-white overflow-hidden">
      <div className="flex-1 min-w-0 relative overflow-hidden font-['DejaVu_Sans_Mono'] text-[12.66px]">
        <div className="flex flex-col -mt-[5px]">
          {rows.map((n) => <Line key={n} n={n} />)}
        </div>
        <div className="absolute left-[90px] top-[29px] w-[1px] h-[731px] bg-[#e4e4e4]" />
      </div>
      <OverviewBar />
    </div>
  );
}

function NavBar() {
  const combo = "h-[22px] shrink-0 bg-white rounded-[4px] border border-[#eeeeee] flex items-center pt-[1px]";
  return (
    <div className="h-[25px] shrink-0 bg-white flex items-end pb-[1px] text-[11.4px] text-[#1b2630]">
      <div className={combo + " w-[387px]"}>
        <Ic c="w-[13px] h-[13px] ml-[12px]" v="0 0 13 13"><rect x=".5" y=".5" width="12" height="12" fill="#fff" stroke="#222" /><text x="2" y="10" fontSize="8" fontWeight="700" fill="#108a10" fontFamily="Liberation Sans">C#</text></Ic>
        <span className="ml-[7px] whitespace-nowrap">OpenApiTester</span>
        <Chev c="ml-auto mr-[7px] text-[#444]" />
      </div>
      <div className={combo + " w-[389px] ml-[5px]"}>
        <Ic c="w-[14px] h-[14px] ml-[10px]"><path d="M1 5L5 2L8 5L5 8ZM10 7L13 7.5V11L10 14L8 11ZM7 6H11V8" fill="none" stroke="#c98a1e" strokeWidth="1.3" /></Ic>
        <span className="ml-[9px] whitespace-nowrap">OpenApiTester.MainWindow</span>
        <Chev c="ml-auto mr-[7px] text-[#444]" />
      </div>
      <div className={combo + " w-[387px] ml-[6px]"}>
        <Ic c="w-[16px] h-[16px] ml-[10px]"><path d="M8 1L14 4V11L8 15L2 11V4Z M2 4L8 7L14 4 M8 7V15" fill="none" stroke="#7a43b6" strokeWidth="1.2" /><rect x="10" y="10" width="6" height="6" fill="#222" /></Ic>
        <span className="ml-[6px] whitespace-nowrap">Button_Click(object sender, RoutedEventArgs e)</span>
        <Chev c="ml-auto mr-[7px] text-[#444]" />
      </div>
      <Ic c="w-[13px] h-[15px] ml-[4px] mb-[3px]" v="0 0 13 15"><path d="M1 6V1H12V6M1 9V14H12V9M0 7.5H13" fill="none" stroke="#222" /></Ic>
    </div>
  );
}

function StatusBar() {
  const sep = "h-[16px] bg-[#dddddd]";
  return (
    <div className="h-[23px] shrink-0 bg-[#f3f3f3] flex items-center text-[11.4px] text-[#1b2630] border-b border-[#1e3a50] rounded-bl-[4px]">
      <div className="w-[74px] h-[19px] shrink-0 bg-white rounded border border-[#eeeeee] flex items-center ml-[1px] pl-[6px]">
        100 %
        <Chev c="ml-auto mr-[8px] text-[#444]" />
      </div>
      <Ic c="w-[12px] h-[12px] ml-[23px]" v="0 0 12 12"><circle cx="6" cy="6" r="6" fill="#1f9d3a" /><path d="M3 6L5.2 8.2L9 4" fill="none" stroke="#fff" strokeWidth="1.5" /></Ic>
      <span className="ml-[5px] w-[85px] shrink-0 whitespace-nowrap">No issues found</span>
      <Sep c={sep + " ml-[32px]"} />
      <Ic c="w-[16px] h-[16px] ml-[6px]"><path d="M15 1L10 6M3 8L8 4L12 8L8 14C6 15 2 15 1 14C2 13 3 11 3 8Z" fill="none" stroke="#c58a1c" strokeWidth="1.2" /></Ic>
      <Sep c={sep + " ml-[4px]"} />
      <Chev c="ml-[7px] text-[#444]" up />
      <div className="ml-[76px] w-[513px] h-[9px] shrink-0 rounded-full bg-[#8a8a8a]" />
      <span className="ml-[80px] w-[70px] shrink-0 whitespace-nowrap">Ln: 67, Ch: 17</span>
      <Sep c={sep + " ml-[7px]"} />
      <span className="ml-[6px] w-[21px] shrink-0 whitespace-nowrap">SPC</span>
      <Sep c={sep + " ml-[6px]"} />
      <span className="ml-[6px] w-[27px] shrink-0 whitespace-nowrap">CRLF</span>
      <Sep c={sep + " ml-[6px]"} />
      <span className="ml-[6px] shrink-0 whitespace-nowrap">UTF-8 with BOM</span>
    </div>
  );
}

function DocArea() {
  const t = "shrink-0 whitespace-nowrap text-[#45525c] ";
  return (
    <div className="w-[1193px] shrink-0 flex flex-col h-[906px] bg-[#c5d9e8] border-l border-[#1e3a50] rounded-bl-[4px]">
      <div className="h-[25px] shrink-0 flex items-center text-[11.4px]">
        <div className="w-[183px] h-[25px] shrink-0 bg-white border border-[#1e3a50] rounded-[4px] flex items-center -ml-[1px]">
          <span className="ml-[6px] font-bold text-[#10202c] whitespace-nowrap w-[130px]">MainWindow.xaml.cs*</span>
          <Ic c="w-[12px] h-[12px] ml-[5px]" v="0 0 12 12"><path d="M6 1L11 6L8.5 6.5L6.5 9.5L2.5 5.5L5.5 3.5ZM3.5 8.5L1 11" fill="#111" stroke="#111" /></Ic>
          <Ic c="w-[11px] h-[11px] ml-[12px]" v="0 0 11 11"><path d="M.5.5L10.5 10.5M10.5.5L.5 10.5" stroke="#222" /></Ic>
        </div>
        <div className={t + "ml-[7px] w-[144px]"}>SteelColumn.cs</div>
        <div className={t + "w-[131px]"}>SteelBeam.cs</div>
        <div className={t + "w-[117px]"}>Material.cs</div>
        <div className={t + "w-[112px]"}>Profile.cs</div>
        <div className={t + "w-[109px]"}>Frame.cs</div>
        <div className={t + "w-[175px]"}>MainWindow.xaml.cs</div>
        <div className={t + "w-[100px]"}>MainWindow.xaml</div>
      </div>
      <div className="h-[25px] shrink-0 flex items-center pt-[3px] text-[11.4px] border-b border-[#1e3a50]">
        <div className="ml-[5px] text-[#45525c]">Frame.cs</div>
        <Dots c="ml-auto" />
        <Ic c="w-[14px] h-[14px] ml-[6px] mr-[2px]"><circle cx="8" cy="8" r="5" fill="none" stroke="#333" strokeWidth="2.2" strokeDasharray="2.6 1.3" /><circle cx="8" cy="8" r="4.2" fill="none" stroke="#333" /><circle cx="8" cy="8" r="1.8" fill="none" stroke="#333" /></Ic>
      </div>
      <NavBar />
      <Editor />
      <StatusBar />
    </div>
  );
}

function VsWindow() {
  return (
    <div className="flex-1 min-w-0 h-[979px] flex flex-col bg-[#a9c6dc] overflow-hidden">
      <VsTitle />
      <VsToolbar />
      <div className="h-[7px] shrink-0" />
      <div className="flex">
        <div className="w-[34px] shrink-0 flex">
          <div className="ml-[4px] w-[3px] h-[80px] bg-[#6f8ea5]" />
          <span className="ml-[3px] [writing-mode:vertical-rl] text-[11.4px] leading-[16px] text-[#1b2630] whitespace-nowrap">Live Visual Tree</span>
        </div>
        <DocArea />
      </div>
    </div>
  );
}

export default function App() {
  return (
    <div className="w-[1883px] h-[979px] flex overflow-hidden font-['Noto_Sans',sans-serif] bg-[#a9c6dc]">
      <LeftApp />
      <div className="w-[1px] shrink-0 bg-[#8aa6bb]" />
      <VsWindow />
    </div>
  );
}
